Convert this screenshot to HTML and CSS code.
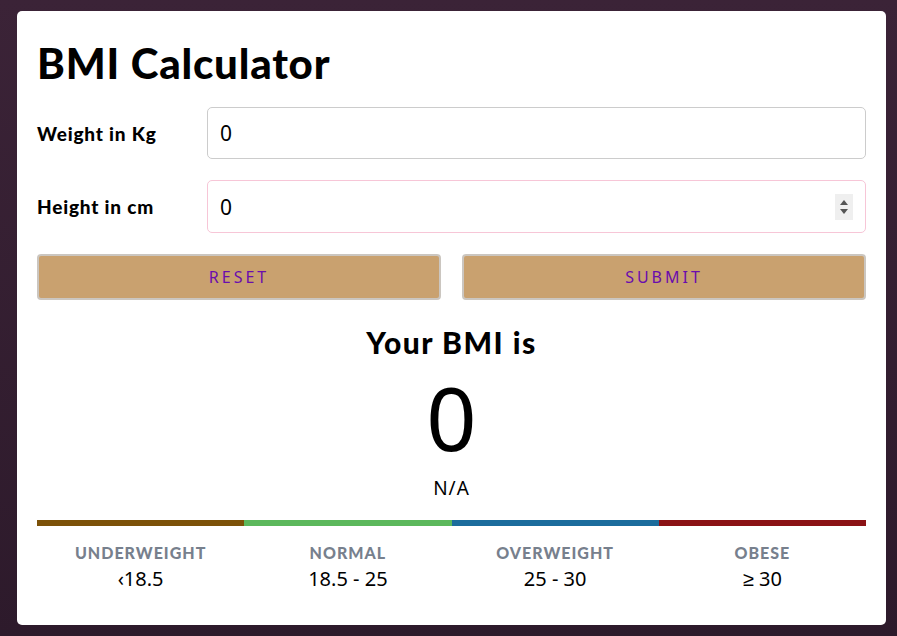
FILE: index.html
```html
<!DOCTYPE html>
<html lang="en">
<head>
<meta charset="utf-8">
<title>BMI Calculator</title>
<link rel="stylesheet" href="styles.css">
</head>
<body>
<main class="card">
  <h1 class="title">BMI Calculator</h1>
  <form class="form">
    <label class="label" for="weight">Weight in Kg</label>
    <input class="input" id="weight" type="text" value="0">
    <label class="label" for="height">Height in cm</label>
    <div class="input input-num">
      <span>0</span>
      <span class="spin"><span class="up"></span><span class="down"></span></span>
    </div>
    <div class="buttons">
      <button type="button" class="btn">Reset</button>
      <button type="button" class="btn">Submit</button>
    </div>
  </form>
  <section class="result">
    <h2 class="result-title">Your BMI is</h2>
    <div class="result-value">0</div>
    <div class="result-cat">N/A</div>
  </section>
  <div class="scale">
    <div class="seg"><div class="bar under"></div><div class="seg-name">Underweight</div><div class="seg-range">&lsaquo;18.5</div></div>
    <div class="seg"><div class="bar normal"></div><div class="seg-name">Normal</div><div class="seg-range">18.5 - 25</div></div>
    <div class="seg"><div class="bar over"></div><div class="seg-name">Overweight</div><div class="seg-range">25 - 30</div></div>
    <div class="seg"><div class="bar obese"></div><div class="seg-name">Obese</div><div class="seg-range">&ge; 30</div></div>
  </div>
</main>
</body>
</html>
```
FILE: styles.css
```css
html, body {
  margin: 0;
  height: 100%;
}
body {
  background: linear-gradient(180deg, #3b2337 0%, #2d1a2b 100%);
  padding: 11px 11px 11px 17px;
  box-sizing: border-box;
  font-family: "Lato", "Noto Sans", sans-serif;
}
.card {
  background: #fff;
  border-radius: 5px;
  height: 614px;
  box-sizing: border-box;
  padding: 28px 20px 20px 20px;
}
.title {
  margin: 0;
  font-size: 42px;
  line-height: 48px;
  font-weight: 900;
  letter-spacing: 0.8px;
  color: #000;
}
.form {
  display: grid;
  grid-template-columns: 170px 1fr;
  row-gap: 21px;
  align-items: center;
  margin-top: 20px;
}
.label {
  font-size: 19px;
  font-weight: 900;
  letter-spacing: 0.8px;
  color: #000;
}
.input {
  box-sizing: border-box;
  height: 52px;
  border: 1px solid #cccccc;
  border-radius: 5px;
  padding: 0 12px;
  font-family: "Noto Sans", sans-serif;
  font-size: 21px;
  color: #000;
  outline: none;
  width: 100%;
}
.input-num {
  height: 53px;
  border-color: #f7c6d7;
  display: flex;
  align-items: center;
  justify-content: space-between;
  padding-right: 12px;
}
.spin {
  width: 18px;
  height: 26px;
  background: #efefef;
  display: flex;
  flex-direction: column;
  align-items: center;
  justify-content: center;
  gap: 4px;
}
.up, .down {
  width: 0;
  height: 0;
  border-left: 4px solid transparent;
  border-right: 4px solid transparent;
}
.up { border-bottom: 5px solid #555; }
.down { border-top: 5px solid #555; }
.buttons {
  grid-column: 1 / -1;
  display: grid;
  grid-template-columns: 1fr 1fr;
  column-gap: 21px;
}
.btn {
  height: 46px;
  background: #c9a16f;
  border: 2px solid #cbc6c0;
  border-radius: 4px;
  color: #6a0dad;
  font-family: "Noto Sans", sans-serif;
  font-size: 16px;
  letter-spacing: 3px;
  text-transform: uppercase;
}
.result {
  text-align: center;
  margin-top: 22px;
}
.result-title {
  margin: 0;
  font-size: 30px;
  line-height: 40px;
  font-weight: 900;
  letter-spacing: 1.5px;
}
.result-value {
  font-family: "Noto Sans", sans-serif;
  font-size: 88px;
  line-height: 110px;
}
.result-cat {
  font-family: "Noto Sans", sans-serif;
  font-size: 19px;
  line-height: 24px;
  letter-spacing: 1px;
  margin-top: 4px;
}
.scale {
  display: grid;
  grid-template-columns: repeat(4, 1fr);
  margin-top: 20px;
  text-align: center;
}
.bar { height: 6px; }
.under { background: #7c5208; }
.normal { background: #5cb85c; }
.over { background: #1b6c9c; }
.obese { background: #8b1215; }
.seg-name {
  margin-top: 17px;
  font-size: 16px;
  font-weight: 900;
  letter-spacing: 1px;
  color: #77808d;
  text-transform: uppercase;
  line-height: 20px;
}
.seg-range {
  font-family: "Noto Sans", sans-serif;
  font-size: 20px;
  line-height: 26px;
  margin-top: 3px;
}
```
